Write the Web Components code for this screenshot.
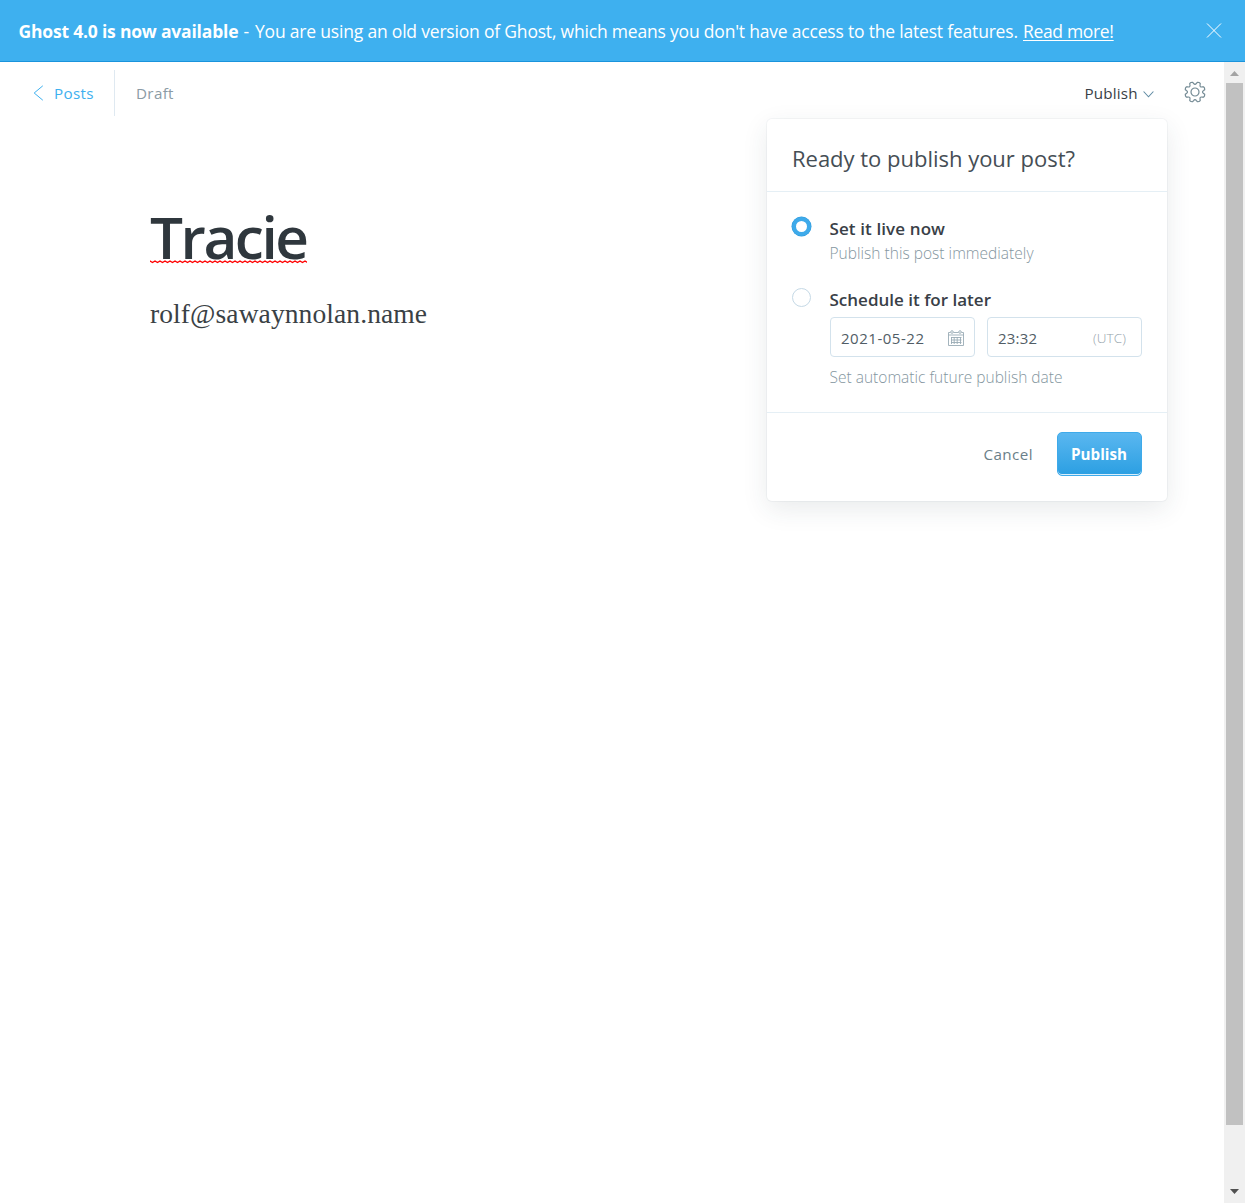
<!DOCTYPE html>
<html lang="en">
<head>
<meta charset="utf-8">
<title>Editor</title>
<style>
html,body{margin:0;height:100%;overflow:hidden;background:#fff;font-family:"Open Sans","Noto Sans",sans-serif;color:#394047}
</style>
</head>
<body>
<gh-app></gh-app>
<script>
const define = (name, html, ready) => {
  const t = document.createElement('template');
  t.innerHTML = html;
  customElements.define(name, class extends HTMLElement {
    connectedCallback() {
      if (this.shadowRoot) return;
      this.attachShadow({mode: 'open'}).append(t.content.cloneNode(true));
      if (ready) ready(this);
    }
  });
};

// Text run tracked to a set measure: w = width, s = font size, l = line height.
define('gh-text', `<style>
  :host{display:block;white-space:nowrap;flex:none}
  span{display:inline-block;vertical-align:top}
</style><span><slot></slot></span>`, el => {
  el.style.fontSize = el.getAttribute('s') + 'px';
  el.style.lineHeight = el.getAttribute('l') + 'px';
  const w = +el.getAttribute('w');
  const span = el.shadowRoot.querySelector('span');
  const now = span.getBoundingClientRect().width;
  el.style.letterSpacing = ((w - now) / Math.max(1, el.textContent.length - 1)) + 'px';
  el.style.width = w + 'px';
});

define('gh-banner', `<style>
  :host{display:flex;box-sizing:border-box;height:62px;flex:none;background:#3eb0ef;border-bottom:1px solid #1b94dc;color:#fff;padding:0 23.500px 0 18.500px;align-items:center;justify-content:space-between}
  .row{display:flex;gap:5px;padding-top:1px}
  a{color:inherit;text-decoration:underline;text-decoration-thickness:1px;text-underline-offset:2px}
  svg{display:block}
</style>
<div class="row"><gh-text s="17.5" l="24" w="220" style="font-weight:700">Ghost 4.0 is now available</gh-text>
<gh-text s="17.5" l="24" w="6.5">-</gh-text>
<gh-text s="17.5" l="24" w="763">You are using an old version of Ghost, which means you don't have access to the latest features.</gh-text>
<gh-text s="17.5" l="24" w="91"><a>Read more!</a></gh-text></div>
<svg width="16" height="16" viewBox="0 0 16 16" stroke="#fff" stroke-width="1"><path d="M1 .500 15 14.500M15 .500 1 14.500"/></svg>`);

define('gh-header', `<style>
  :host{display:flex;height:62px;justify-content:space-between;padding:0 18px 0 33px;font-size:15px}
  .side{display:flex;align-items:center}
  svg{display:block;flex:none}
  .posts{color:#3eb0ef;margin-left:10px}
  .rule{width:1px;height:46px;background:#dfe9f1;margin:8px 21px 0 20.500px;align-self:flex-start}
  .draft{color:#8b9ba5}
  .pub{color:#394047;margin-right:5px}
  .gear{margin:-3px 0 0 30.500px}
</style>
<div class="side">
  <svg width="11" height="16" viewBox="0 0 11 16" fill="none" stroke="#3eb0ef" stroke-width="1"><path d="M9.8.8 1.2 8l8.600 7.200"/></svg>
  <gh-text class="posts" s="15.2" l="63" w="39.5">Posts</gh-text>
  <span class="rule"></span>
  <gh-text class="draft" s="15.2" l="63" w="37.500">Draft</gh-text>
</div>
<div class="side">
  <gh-text class="pub" s="15.2" l="63" w="53">Publish</gh-text>
  <svg style="margin-top:2px" width="11" height="8" viewBox="0 0 11 8" fill="none" stroke="#5f8ba3" stroke-width="1.1"><path d="M.6 1.500 5.500 6.800 10.400 1.500"/></svg>
  <svg class="gear" width="22" height="22" viewBox="-11 -11 22 22" fill="none" stroke="#738a94" stroke-width="1.2"><circle r="4"/><path id="g" stroke-linejoin="round"/></svg>
</div>`, el => {
  // Eight rounded teeth joined by concave valleys.
  const p = (r, deg) => { const a = deg * Math.PI / 180; return (r * Math.sin(a)).toFixed(2) + ' ' + (-r * Math.cos(a)).toFixed(2); };
  let d = '';
  for (let i = 0; i < 8; i++) {
    const c = i * 45 + 22.5;
    d += (i ? 'L' : 'M') + p(10, c - 9) + 'Q' + p(10.7, c) + ' ' + p(10, c + 9) + 'L' + p(8.7, c + 13) + 'Q' + p(6.500, c + 22.5) + ' ' + p(8.7, c + 32);
  }
  el.shadowRoot.getElementById('g').setAttribute('d', d + 'Z');
});

define('gh-post', `<style>
  :host{display:flex;flex-direction:column;align-items:flex-start;padding:72px 0 0 150px}
  .title{font-weight:600;color:#2f373d}
  .wave{display:block;margin-top:-16px}
  .mail{font-family:"Liberation Serif",serif;color:#3a4145;margin-top:32px}
</style>
<gh-text class="title" s="58.5" l="80" w="159">Tracie</gh-text>
<svg class="wave" width="157" height="4"><defs><pattern id="w" width="5" height="4" patternUnits="userSpaceOnUse"><path d="M-1.200 2.500 0 1 2.500 2.600 5 1 6.200 2.500" fill="none" stroke="#f00" stroke-width="1.3"/></pattern></defs><rect width="157" height="4" fill="url(#w)"/></svg>
<gh-text class="mail" s="27.500" l="36" w="277">rolf@sawaynnolan.name</gh-text>`);

define('gh-radio', `<style>
  :host{display:flex;gap:18.500px;align-items:flex-start}
  i{box-sizing:border-box;width:19px;height:19px;border-radius:50%;border:1px solid #c5d9e6;background:#fff;flex:none}
  :host([checked]) i{border:4.500px solid #3eaaea;box-shadow:0 0 0 .5px #2f9bdc}
  div{display:flex;flex-direction:column}
</style><i></i><div><slot></slot></div>`);

define('gh-input', `<style>
  :host{display:flex;box-sizing:border-box;height:40px;border:1px solid #d3e2ec;border-radius:4px;align-items:center;justify-content:space-between;padding:2px 10px 0 10px;background:#fff;color:#515d66}
</style><slot></slot>`);

define('gh-button', `<style>
  :host{display:flex;box-sizing:border-box;width:85px;height:44px;border-radius:5px;border:1px solid #3eaaea;background:linear-gradient(#5ab7f0,#2b9fe2);box-shadow:inset 0 -1px 0 #d9effc;color:#fff;font-weight:700;align-items:center;justify-content:center;padding:0 1px 1px 0}
</style><slot></slot>`);

define('gh-publish-menu', `<style>
  :host{position:absolute;left:767px;top:119px;width:400px;height:382px;background:#fff;border-radius:5px;box-shadow:0 0 0 1px rgba(99,114,130,.06),0 8px 26px rgba(39,56,73,.1);display:flex;flex-direction:column}
  header{box-sizing:border-box;height:73px;border-bottom:1px solid #e5eff5;padding:19px 25px 0;color:#454e55}
  section{box-sizing:border-box;height:221px;border-bottom:1px solid #e5eff5;padding:25px 25px 0 25px}
  footer{display:flex;justify-content:flex-end;gap:24.500px;padding:19px 25px 0;align-items:center}
  .label{font-weight:600;color:#394047}
  .hint{font-weight:300;color:#8496a0}
  .fields{display:flex;gap:12px;margin-left:.5px}
  .utc{font-weight:300;color:#95a3ab;margin-right:5px}
  .cancel{color:#6b7f89}
  svg{display:block}
</style>
<header><gh-text s="22" l="40" w="283">Ready to publish your post?</gh-text></header>
<section>
  <gh-radio checked>
    <gh-text class="label" s="17" l="24" w="115.500">Set it live now</gh-text>
    <gh-text class="hint" s="15.5" l="25" w="204">Publish this post immediately</gh-text>
  </gh-radio>
  <gh-radio style="margin-top:22px">
    <gh-text class="label" s="17" l="24" w="161.500">Schedule it for later</gh-text>
    <div class="fields" style="margin-top:5px">
      <gh-input style="width:145px"><gh-text s="15" l="36" w="83">2021-05-22</gh-text>
        <svg width="16" height="16" viewBox="0 0 16 16" fill="none" stroke="#9aabb5" stroke-width=".9"><path d="M.5 2.500V15.500H15.500V2.500H13.500M10.500 2.500H5.500M2.500 2.500H.5M.5 5H15.500M3 7.500H13.500M3 10H13.500M3 12.500H13.500M3.500 7V14M6.200 7V14M9.200 7V14M12.500 7V14"/><circle cx="4" cy="2" r="1.300"/><circle cx="12" cy="2" r="1.300"/></svg></gh-input>
      <gh-input style="width:155px"><gh-text s="15" l="36" w="39">23:32</gh-text><gh-text class="utc" s="13.5" l="36" w="33">(UTC)</gh-text></gh-input>
    </div>
    <gh-text class="hint" s="15.5" l="25" w="233" style="margin-top:8px">Set automatic future publish date</gh-text>
  </gh-radio>
</section>
<footer><gh-text class="cancel" s="15.200" l="24" w="49">Cancel</gh-text><gh-button><gh-text s="15.2" l="24" w="56">Publish</gh-text></gh-button></footer>`);

define('gh-scrollbar', `<style>
  :host{display:flex;flex-direction:column;width:21px;background:#f0f0f0;align-items:center}
  i{width:17px;height:1042px;background:#c1c1c1}
  svg{display:block;width:9px;height:5px}
</style>
<svg style="margin:9px 0 7px" viewBox="0 0 9 5"><path d="M0 5 4.500 0 9 5Z" fill="#a3a3a3"/></svg><i></i>
<svg style="margin-top:64px" viewBox="0 0 9 5"><path d="M0 0 4.500 5 9 0Z" fill="#505050"/></svg>`);

define('gh-app', `<style>
  :host{display:flex;flex-direction:column;width:1245px;height:1203px}
  .body{display:flex;flex:1;min-height:0}
  main{flex:1;min-width:0}
</style>
<gh-banner></gh-banner>
<div class="body"><main><gh-header></gh-header><gh-post></gh-post></main><gh-scrollbar></gh-scrollbar></div>
<gh-publish-menu></gh-publish-menu>`);
</script>
</body>
</html>
